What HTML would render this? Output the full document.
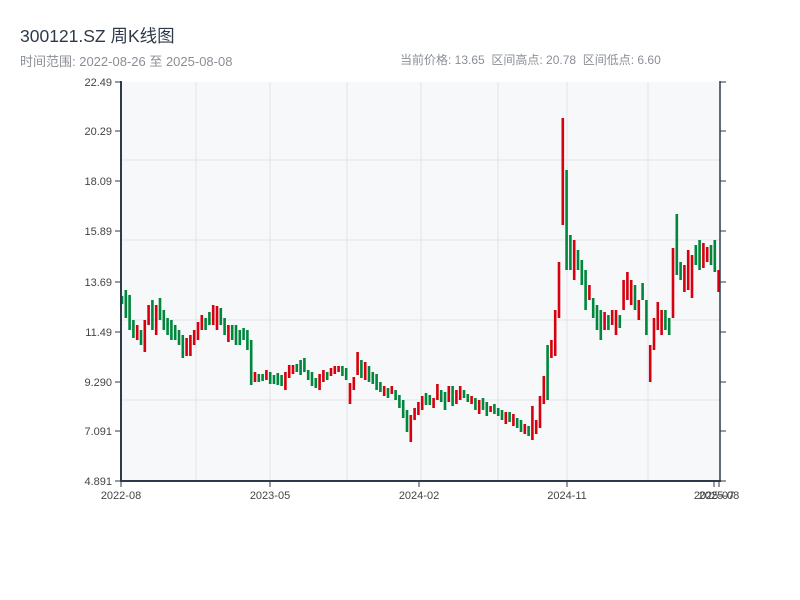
<!DOCTYPE html>
<html><head><meta charset="utf-8"><style>
body{margin:0;background:#fff;width:800px;height:600px;overflow:hidden;font-family:"Liberation Sans","Noto Sans CJK SC",sans-serif;}
.t{position:absolute;left:20px;top:23px;font-size:17.5px;color:#2e3a4a;}
.s{position:absolute;left:20px;top:51px;font-size:13px;color:#8a8f96;}
.r{position:absolute;left:400px;top:51px;font-size:12px;color:#8a8f96;}
</style></head><body>
<div class="t">300121.SZ 周K线图</div>
<div class="s">时间范围: 2022-08-26 至 2025-08-08</div>
<div class="r">当前价格: 13.65&nbsp; 区间高点: 20.78&nbsp; 区间低点: 6.60</div>
<svg width="800" height="600" style="position:absolute;left:0;top:0" font-family="Liberation Sans, sans-serif" font-size="11" fill="#444">
<rect x="121" y="82" width="599" height="399" fill="#f6f8fa"/>
<g stroke="#e2e5e9">
<line x1="196" y1="82" x2="196" y2="481"/><line x1="270" y1="82" x2="270" y2="481"/><line x1="347" y1="82" x2="347" y2="481"/><line x1="421" y1="82" x2="421" y2="481"/><line x1="498" y1="82" x2="498" y2="481"/><line x1="567" y1="82" x2="567" y2="481"/><line x1="648" y1="82" x2="648" y2="481"/>
<line x1="121" y1="160" x2="720" y2="160"/><line x1="121" y1="240" x2="720" y2="240"/><line x1="121" y1="320" x2="720" y2="320"/><line x1="121" y1="400" x2="720" y2="400"/>
</g>
<path stroke="#00873c" stroke-width="2.6" fill="none" d="M122 296V304M125.8 290V318M129.6 295V330M133.4 320V338M141 330V345M152.4 300V330M160 298V320M163.8 310V330M167.6 318V335M171.4 320V340M175.2 325V340M179 330V345M182.8 335V358M205.6 318V330M209.4 312V325M220.8 308V325M224.6 318V335M232.2 325V340M236 325V345M239.8 330V345M243.6 328V340M247.4 330V350M251.2 340V385M258.8 374V382M262.6 374V381M270.2 372V384M274 375V384M277.8 373V385M281.6 375V386M296.8 364V372M300.6 360V375M304.4 358V372M308.2 370V380M312 372V386M315.8 378V388M327.2 372V380M342.4 366V376M346.2 368V380M361.4 360V378M369 366V382M372.8 372V384M376.6 374V390M380.4 382V392M388 388V398M395.6 390V400M399.4 395V408M403.2 400V418M407 410V432M426 393V405M429.8 395V405M441.2 390V402M445 392V410M452.6 386V406M464 390V398M467.8 394V402M475.4 398V410M483 398V410M486.8 402V416M494.4 404V414M498.2 408V416M502 410V420M509.6 412V422M517.2 418V428M521 420V432M528.6 426V436M547.6 345V400M566.6 170V270M570.4 235V270M578 250V270M581.8 260V285M585.6 270V310M593.2 298V318M597 305V330M600.8 310V340M608.4 315V330M619.8 315V328M635 285V310M642.6 283V300M646.4 300V335M665.4 310V330M669.2 318V335M676.8 214V275M680.6 262V280M695.8 245V265M699.6 240V270M711 245V265M714.8 240V272"/>
<path stroke="#d7000f" stroke-width="2.6" fill="none" d="M137.2 325V340M144.8 320V352M148.6 305V325M156.2 305V335M186.6 338V356M190.4 335V356M194.2 330V345M198 322V340M201.8 315V330M213.2 305V325M217 306V330M228.4 325V342M255 372V382M266.4 370V380M285.4 372V390M289.2 365V378M293 365V374M319.6 374V390M323.4 370V382M331 368V376M334.8 366V374M338.6 366V372M350 383V404M353.8 377V390M357.6 352V375M365.2 362V380M384.2 386V396M391.8 386V394M410.8 415V442M414.6 408V420M418.4 402V415M422.2 396V410M433.6 398V408M437.4 384V400M448.8 386V402M456.4 390V404M460.2 386V400M471.6 396V404M479.2 400V414M490.6 406V412M505.8 412V424M513.4 414V426M524.8 424V434M532.4 406V440M536.2 420V434M540 396V428M543.8 376V404M551.4 340V358M555.2 310V356M559 262V318M562.8 118V225M574.2 240V280M589.4 285V300M604.6 312V330M612.2 310V325M616 310V335M623.6 280V310M627.4 272V300M631.2 280V305M638.8 300V320M650.2 345V382M654 318V350M657.8 302V330M661.6 310V335M673 248V318M684.4 265V292M688.2 250V290M692 255V298M703.4 243V268M707.2 247V262M718.6 270V292"/>
<line x1="121" y1="81" x2="121" y2="482" stroke="#2e3a4a" stroke-width="2"/>
<line x1="120" y1="481" x2="721" y2="481" stroke="#2e3a4a" stroke-width="2"/>
<line x1="720" y1="81" x2="720" y2="482" stroke="#2e3a4a" stroke-width="1.5"/>
<g stroke="#2e3a4a">
<path d="M115 82H121M115 131H121M115 181H121M115 231H121M115 282H121M115 332H121M115 382H121M115 431H121M115 481H121M720 82H726M720 131H726M720 181H726M720 231H726M720 282H726M720 332H726M720 382H726M720 431H726M720 481H726M121 481V487M270 481V487M419 481V487M567 481V487M714 481V487M719 481V487"/>
</g>
<g text-anchor="end">
<text x="112" y="86">22.49</text><text x="112" y="135">20.29</text><text x="112" y="185">18.09</text><text x="112" y="235">15.89</text><text x="112" y="286">13.69</text><text x="112" y="336">11.49</text><text x="112" y="386">9.290</text><text x="112" y="435">7.091</text><text x="112" y="485">4.891</text>
</g>
<g text-anchor="middle">
<text x="121" y="499">2022-08</text><text x="270" y="499">2023-05</text><text x="419" y="499">2024-02</text><text x="567" y="499">2024-11</text><text x="714" y="499">2025-07</text><text x="719" y="499">2025-08</text>
</g>
</svg>
</body></html>
